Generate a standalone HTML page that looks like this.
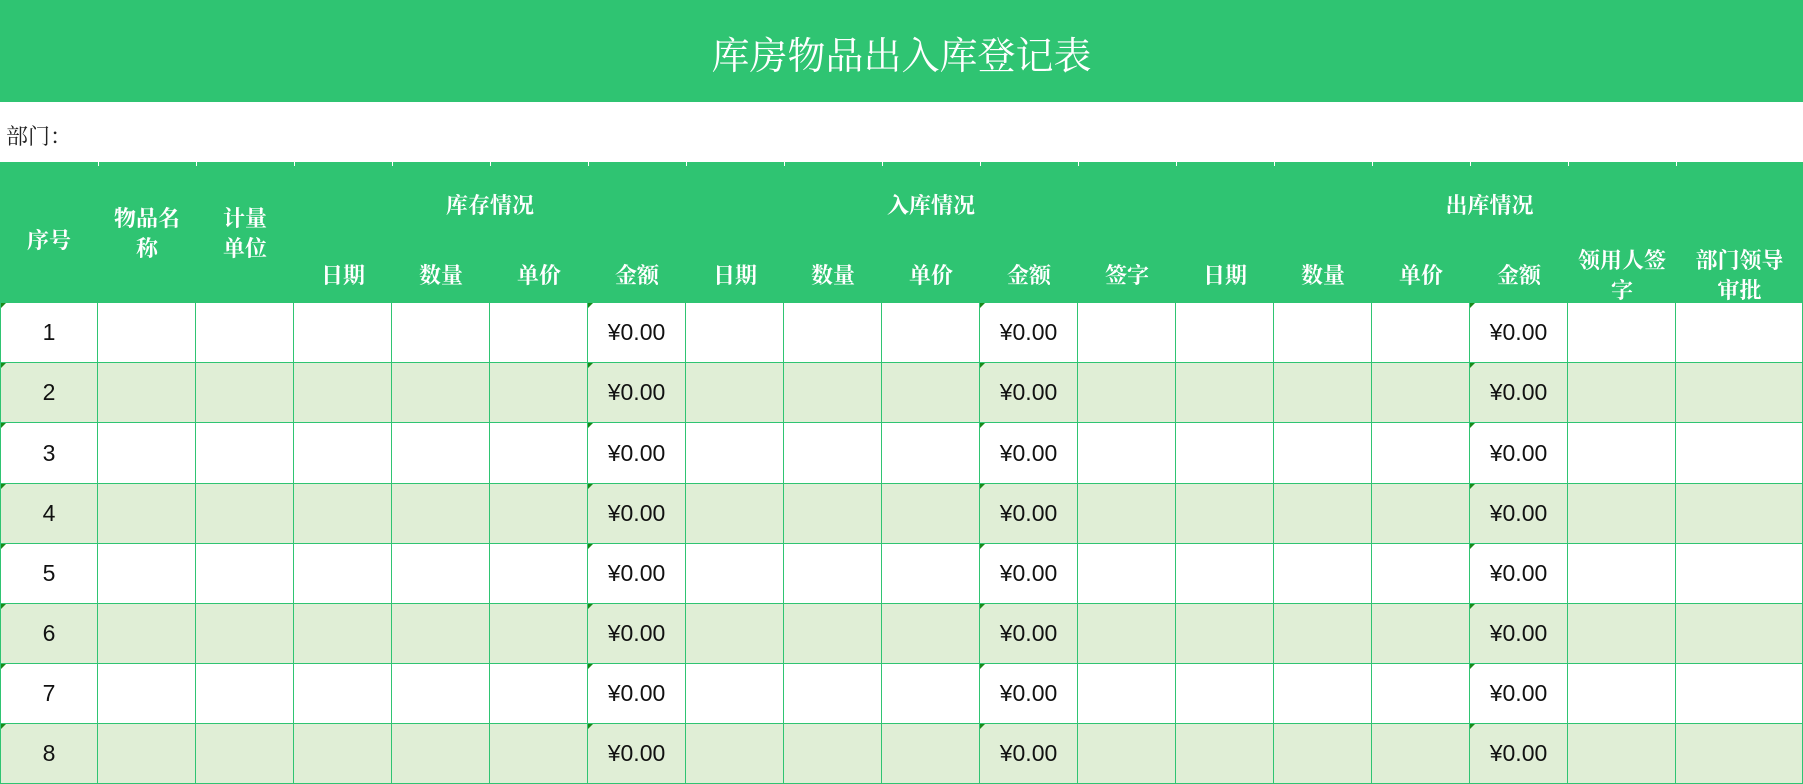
<!DOCTYPE html>
<html><head><meta charset="utf-8"><style>
*{margin:0;padding:0;box-sizing:border-box}
body{width:1803px;height:784px;overflow:hidden;background:#fff;position:relative;font-family:"Noto Serif CJK SC",serif}
.a{position:absolute}
.t{color:#fff;text-align:center;font-size:22px;line-height:30px;font-weight:bold;font-family:"Noto Serif CJK SC",serif;white-space:nowrap}
.c{position:absolute;border-right:1px solid #2fc472;border-bottom:1px solid #2fc472;font-family:"Liberation Sans",sans-serif;font-size:23px;color:#111;display:flex;align-items:center;justify-content:center}
.tri{position:absolute;left:0;top:0;width:0;height:0;border-top:5px solid #1a8a1a;border-right:5px solid transparent}
</style></head><body>
<div class="a" style="left:0;top:0;width:1803px;height:102px;background:#2fc472"></div>
<div class="a" style="left:0;top:0;width:1803px;height:102px;line-height:106px;text-align:center;color:#fff;font-size:38px">库房物品出入库登记表</div>
<div class="a" style="left:6px;top:121px;font-size:22px;line-height:30px;color:#222">部门：</div>
<div class="a" style="left:0;top:162px;width:1803px;height:142px;background:#2fc472"></div>
<div id="g"></div>
<script>
var x=[0,98,196,294,392,490,588,686,784,882,980,1078,1176,1274,1372,1470,1568,1676,1803];
var h='';
function T(l,r,y,s){h+='<div class="a t" style="left:'+l+'px;width:'+(r-l)+'px;top:'+y+'px">'+s+'</div>';}
for(var i=1;i<x.length-1;i++)h+='<div class="a" style="left:'+x[i]+'px;top:162px;width:1px;height:4px;background:#fff"></div>';
T(0,98,225,'序号');T(98,196,203,'物品名<br>称');T(196,294,203,'计量<br>单位');
T(294,686,190,'库存情况');T(686,1176,190,'入库情况');T(1176,1803,190,'出库情况');
var sub=['日期','数量','单价','金额','日期','数量','单价','金额','签字','日期','数量','单价','金额'];
for(var i=0;i<13;i++)T(x[i+3],x[i+4],260,sub[i]);
T(1568,1676,245,'领用人签<br>字');T(1676,1803,245,'部门领导<br>审批');
var ry=[303,363,423,484,544,604,664,724,784];
for(var r=0;r<8;r++){var bg=r%2?'#e0eed6':'#fff';
 for(var c=0;c<18;c++){var t='',tri='';
  if(c==0){t=r+1;tri='<div class="tri"></div>';}
  if(c==6||c==10||c==15){t='¥0.00';tri='<div class="tri"></div>';}
  h+='<div class="c" style="left:'+x[c]+'px;top:'+ry[r]+'px;width:'+(x[c+1]-x[c])+'px;height:'+(ry[r+1]-ry[r])+'px;background:'+bg+';'+(c==0?'border-left:1px solid #2fc472;':'')+'">'+tri+t+'</div>';}}
document.getElementById('g').innerHTML=h;
</script>
</body></html>
